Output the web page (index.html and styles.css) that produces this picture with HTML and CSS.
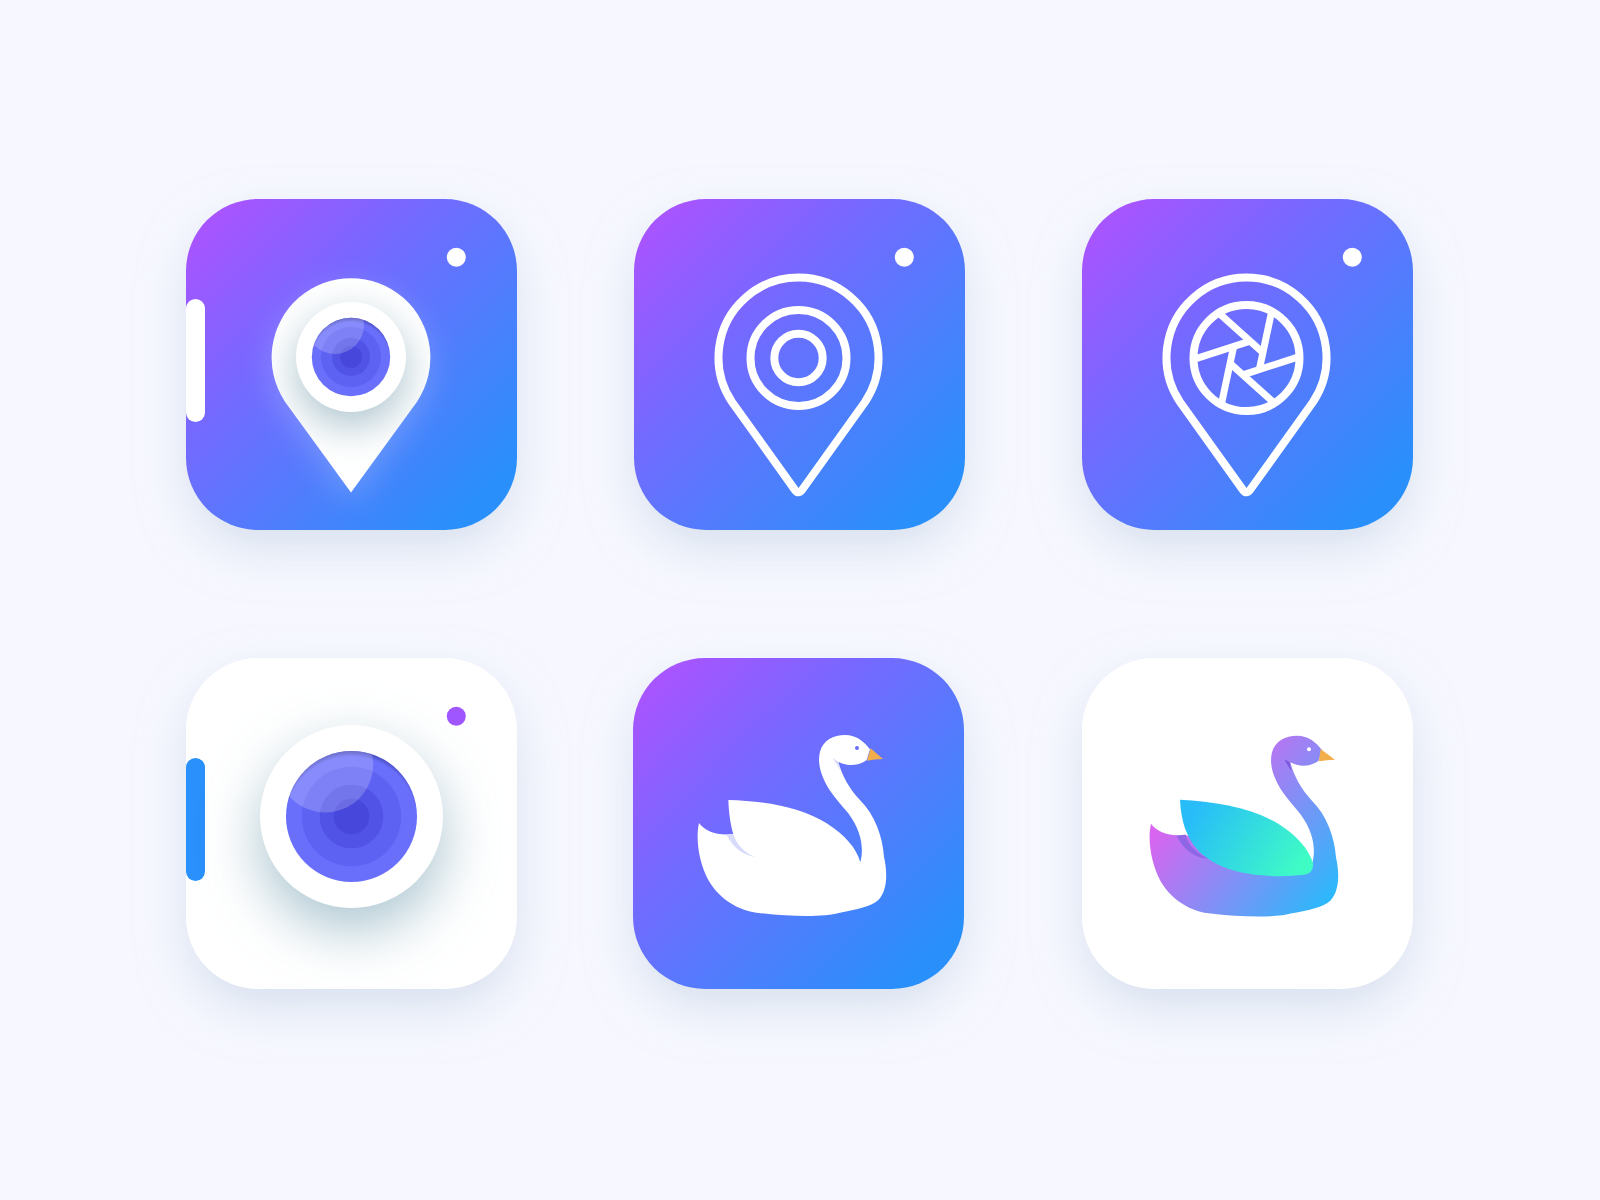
FILE: index.html
```html
<!DOCTYPE html>
<html lang="en">
<head>
<meta charset="utf-8">
<title>App icon set</title>
<link rel="stylesheet" href="styles.css">
</head>
<body>
<main class="grid">

  <div class="card card--gradient">
    <svg class="art" viewBox="0 0 331 331" width="331" height="331" aria-hidden="true">
      <defs>
        <clipPath id="pinClip"><path d="M165 293.5L99 202.7A79.4 79.4 0 1 1 231 202.7Z"/></clipPath>
        <clipPath id="lensClipA"><circle cx="165" cy="158" r="39"/></clipPath>
        <radialGradient id="lensEdgeA" cx="50%" cy="56%" r="56%">
          <stop offset="90%" stop-color="#1c1c66" stop-opacity="0"/>
          <stop offset="100%" stop-color="#1c1c66" stop-opacity=".45"/>
        </radialGradient>
      </defs>
      <rect class="fill-white" x="0" y="100" width="19" height="123" rx="9.5"/>
      <circle class="fill-white" cx="270.3" cy="58.3" r="9.5"/>
      <path class="fill-white pin-glow" d="M165 293.5L99 202.7A79.4 79.4 0 1 1 231 202.7Z"/>
      <g clip-path="url(#pinClip)">
        <circle class="fill-white pin-disc-shadow" cx="165" cy="158" r="55"/>
      </g>
      <circle class="ring-1" cx="165" cy="158" r="39.2"/>
      <circle class="ring-2" cx="165" cy="158" r="30"/>
      <circle class="ring-3" cx="165" cy="158" r="19"/>
      <circle class="ring-4" cx="165" cy="158" r="11"/>
      <circle cx="165" cy="158" r="39.2" fill="url(#lensEdgeA)"/>
      <g clip-path="url(#lensClipA)">
        <circle class="lens-shine" cx="149" cy="126" r="29"/>
      </g>
    </svg>
  </div>

  <div class="card card--gradient">
    <svg class="art" viewBox="0 0 331 331" width="331" height="331" aria-hidden="true">
      <circle class="fill-white" cx="270.3" cy="58.3" r="9.5"/>
      <path class="line" d="M98 203A80 80 0 1 1 231 203L168 291Q164.5 295.7 161 291Z"/>
      <circle class="line" cx="164.5" cy="159" r="48"/>
      <circle class="line" cx="164.5" cy="159" r="24.2"/>
    </svg>
  </div>

  <div class="card card--gradient">
    <svg class="art" viewBox="0 0 331 331" width="331" height="331" aria-hidden="true">
      <circle class="fill-white" cx="270.3" cy="58.3" r="9.5"/>
      <path class="line" d="M98 203A80 80 0 1 1 231 203L168 291Q164.5 295.7 161 291Z"/>
      <circle class="line" cx="164.5" cy="159" r="53"/>
      <g transform="translate(164.5 159)">
        <line class="blade" x1="-52" y1="1.2" x2="3.6" y2="-16.9"/>
        <line class="blade" x1="-52" y1="1.2" x2="3.6" y2="-16.9" transform="rotate(60)"/>
        <line class="blade" x1="-52" y1="1.2" x2="3.6" y2="-16.9" transform="rotate(120)"/>
        <line class="blade" x1="-52" y1="1.2" x2="3.6" y2="-16.9" transform="rotate(180)"/>
        <line class="blade" x1="-52" y1="1.2" x2="3.6" y2="-16.9" transform="rotate(240)"/>
        <line class="blade" x1="-52" y1="1.2" x2="3.6" y2="-16.9" transform="rotate(300)"/>
      </g>
    </svg>
  </div>

  <div class="card card--white">
    <svg class="art" viewBox="0 0 331 331" width="331" height="331" aria-hidden="true">
      <defs>
        <clipPath id="lensClipB"><circle cx="165.5" cy="158.5" r="65.5"/></clipPath>
        <radialGradient id="lensEdgeB" cx="50%" cy="55%" r="55%">
          <stop offset="92%" stop-color="#1c1c66" stop-opacity="0"/>
          <stop offset="100%" stop-color="#1c1c66" stop-opacity=".45"/>
        </radialGradient>
      </defs>
      <rect class="fill-blue" x="0" y="100" width="19" height="123" rx="9.5"/>
      <circle class="fill-purple" cx="270.3" cy="58.3" r="9.5"/>
      <circle class="fill-white disc-shadow" cx="165.5" cy="158.5" r="91.5"/>
      <circle class="ring-1" cx="165.5" cy="158.5" r="65.5"/>
      <circle class="ring-2" cx="165.5" cy="158.5" r="49.7"/>
      <circle class="ring-3" cx="165.5" cy="158.5" r="31.8"/>
      <circle class="ring-4" cx="165.5" cy="158.5" r="17.8"/>
      <circle cx="165.5" cy="158.5" r="65.5" fill="url(#lensEdgeB)"/>
      <g clip-path="url(#lensClipB)">
        <circle class="lens-shine" cx="139.2" cy="106.5" r="48"/>
      </g>
    </svg>
  </div>

  <div class="card card--gradient card--nudged">
    <svg class="art" viewBox="0 0 331 331" width="331" height="331" aria-hidden="true">
      <g transform="translate(47 62) scale(.3333)">
        <path class="fill-white" d="M57 309C75 335 115 348 160 342C150 310 146 270 145 240C250 243 360 260 440 310C495 345 530 385 541 427C552 385 545 335 505 280C485 255 445 215 428 170C418 145 414 120 420 95C430 60 460 45 495 45C530 45 552 65 570 88L560 120C540 136 505 142 475 125C485 165 510 210 540 240C585 285 608 350 612 410C622 455 624 510 595 540C575 560 530 568 480 578C430 592 330 590 230 578C160 568 110 525 85 480C60 435 45 360 57 309Z"/>
        <path class="fill-beak" d="M572 85L609 117Q585 117 561 122Z"/>
        <circle class="fill-eye" cx="531" cy="84" r="6"/>
        <path class="fill-shade" d="M140 344L160 342C170 375 195 400 228 412C190 405 160 385 140 344Z"/>
        <path class="fill-shade" d="M458 114L475 125Q476 136 482 152Q468 130 458 114Z"/>
      </g>
    </svg>
  </div>

  <div class="card card--white">
    <svg class="art" viewBox="0 0 331 331" width="331" height="331" aria-hidden="true">
      <defs>
        <linearGradient id="swanBody" gradientUnits="userSpaceOnUse" x1="70" y1="338" x2="482" y2="668">
          <stop offset="0" stop-color="#d865f0"/>
          <stop offset="1" stop-color="#2db8fb"/>
        </linearGradient>
        <linearGradient id="swanWing" gradientUnits="userSpaceOnUse" x1="200" y1="260" x2="500" y2="450">
          <stop offset="0" stop-color="#28bdf8"/>
          <stop offset="1" stop-color="#3ffcc5"/>
        </linearGradient>
      </defs>
      <g transform="translate(50 62.7) scale(.3333)">
        <path fill="url(#swanBody)" d="M57 309C75 335 115 348 160 342L300 400L541 427C552 385 545 335 505 280C485 255 445 215 428 170C418 145 414 120 420 95C430 60 460 45 495 45C530 45 552 65 570 88L560 120C540 136 505 142 475 125C485 165 510 210 540 240C585 285 608 350 612 410C622 455 624 510 595 540C575 560 530 568 480 578C430 592 330 590 230 578C160 568 110 525 85 480C60 435 45 360 57 309Z"/>
        <path class="fill-beak" d="M566 85L609 117Q585 117 561 122Z"/>
        <circle class="fill-white" cx="531" cy="86" r="6"/>
        <path class="fill-shade-dark" d="M134 345L160 342C170 375 195 400 232 414C190 412 155 390 134 345Z"/>
        <path class="fill-shade-neck" d="M457 116L473 125Q474 136 478 152Q466 132 457 116Z"/>
        <path fill="url(#swanWing)" d="M144 237C250 243 360 260 440 310C495 345 530 385 543 427Q546 458 515 462C450 470 370 468 300 448C215 420 150 370 144 237Z"/>
      </g>
    </svg>
  </div>

</main>
</body>
</html>
```
FILE: styles.css
```css
html, body {
  margin: 0;
  padding: 0;
  background: #f7f8ff;
}

body {
  min-height: 1200px;
  font-family: "Liberation Sans", sans-serif;
}

.grid {
  display: grid;
  grid-template-columns: repeat(3, 331px);
  gap: 128px 117px;
  padding: 199px 0 0 186px;
}

.card {
  width: 331px;
  height: 331px;
  border-radius: 72px;
  box-shadow: 0 20px 50px -4px rgba(186, 203, 220, .55);
}

.card--gradient {
  background: linear-gradient(135deg, #a655ff 8%, #7569ff 36%, #4a80fc 66%, #288ffb 90%);
}

.card--white {
  background: #fff;
}

.card--nudged {
  margin-left: -1px;
}

.art {
  display: block;
  overflow: visible;
}

.fill-white { fill: #fff; }
.fill-blue { fill: #2a90fb; }
.fill-purple { fill: #a056ff; }
.fill-beak { fill: #f2ae4b; }
.fill-eye { fill: #6a6ffb; }
.fill-shade { fill: #d8dcfa; }
.fill-shade-dark { fill: #8f66e6; }
.fill-shade-neck { fill: #7d55e0; }

.line {
  fill: none;
  stroke: #fff;
  stroke-width: 8;
  stroke-linejoin: round;
}

.blade {
  fill: none;
  stroke: #fff;
  stroke-width: 7;
}

.ring-1 { fill: #696ffb; }
.ring-2 { fill: #5d62f3; }
.ring-3 { fill: #5053e6; }
.ring-4 { fill: #4747dc; }

.lens-shine {
  fill: #fff;
  fill-opacity: .2;
}

.pin-glow {
  filter: drop-shadow(0 10px 16px rgba(255, 255, 255, .2));
}

.pin-disc-shadow {
  filter: drop-shadow(0 14px 20px rgba(150, 180, 192, .8));
}

.disc-shadow {
  filter: drop-shadow(0 22px 28px rgba(150, 182, 196, .8));
}
```
